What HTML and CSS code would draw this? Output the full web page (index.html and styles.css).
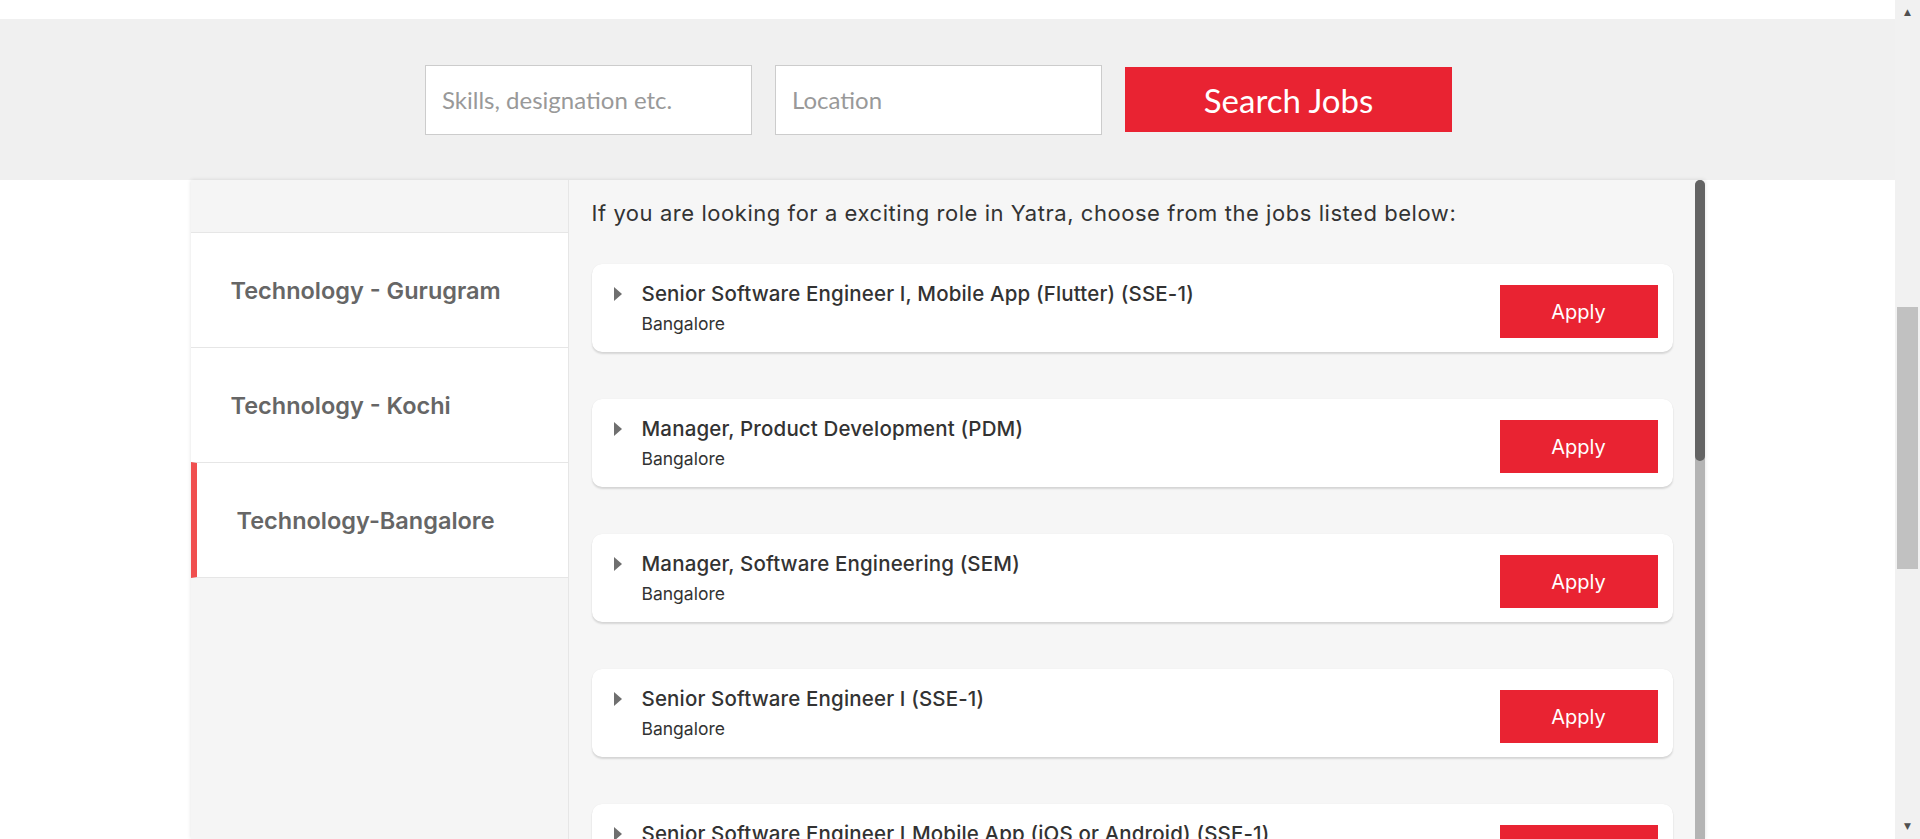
FILE: index.html
```html
<!DOCTYPE html>
<html lang="en">
<head>
<meta charset="utf-8">
<title>Careers - Jobs</title>
<link rel="stylesheet" href="styles.css">
</head>
<body>
<div class="page">
  <div class="main">
    <div class="top-strip"></div>
    <header class="search-band">
      <form class="search-form">
        <input class="field" type="text" placeholder="Skills, designation etc.">
        <input class="field" type="text" placeholder="Location">
        <button class="search-btn" type="button">Search Jobs</button>
      </form>
    </header>
    <section class="jobs">
      <nav class="dept-nav">
        <div class="dept-head"></div>
        <a class="dept">Technology - Gurugram</a>
        <a class="dept">Technology - Kochi</a>
        <a class="dept active">Technology-Bangalore</a>
      </nav>
      <div class="job-panel">
        <div class="job-list">
          <p class="intro">If you are looking for a exciting role in Yatra, choose from the jobs listed below:</p>
          <div class="job-card">
            <span class="caret"></span>
            <div class="job-info">
              <div class="job-title">Senior Software Engineer I, Mobile App (Flutter) (SSE-1)</div>
              <div class="job-loc">Bangalore</div>
            </div>
            <button class="apply-btn" type="button">Apply</button>
          </div>
          <div class="job-card">
            <span class="caret"></span>
            <div class="job-info">
              <div class="job-title">Manager, Product Development (PDM)</div>
              <div class="job-loc">Bangalore</div>
            </div>
            <button class="apply-btn" type="button">Apply</button>
          </div>
          <div class="job-card">
            <span class="caret"></span>
            <div class="job-info">
              <div class="job-title">Manager, Software Engineering (SEM)</div>
              <div class="job-loc">Bangalore</div>
            </div>
            <button class="apply-btn" type="button">Apply</button>
          </div>
          <div class="job-card">
            <span class="caret"></span>
            <div class="job-info">
              <div class="job-title">Senior Software Engineer I (SSE-1)</div>
              <div class="job-loc">Bangalore</div>
            </div>
            <button class="apply-btn" type="button">Apply</button>
          </div>
          <div class="job-card">
            <span class="caret"></span>
            <div class="job-info">
              <div class="job-title">Senior Software Engineer I,Mobile App (iOS or Android) (SSE-1)</div>
              <div class="job-loc">Bangalore</div>
            </div>
            <button class="apply-btn" type="button">Apply</button>
          </div>
        </div>
        <div class="panel-scrollbar"><div class="panel-thumb"></div></div>
      </div>
    </section>
  </div>
  <div class="page-scrollbar">
    <span class="sb-arrow">&#9650;</span>
    <div class="sb-track"><div class="sb-thumb"></div></div>
    <span class="sb-arrow">&#9660;</span>
  </div>
</div>
</body>
</html>
```
FILE: styles.css
```css
* { box-sizing: border-box; }
html, body { margin: 0; padding: 0; height: 100%; }
body { background: #fff; overflow: hidden; font-family: "Inter", "Noto Sans", sans-serif; }

.page { display: flex; height: 839px; }
.main { flex: 1; display: flex; flex-direction: column; min-width: 0; }

.top-strip { height: 19px; background: #fff; }

.search-band {
  height: 161px;
  background: #f0f0f0;
  display: flex;
  align-items: center;
  justify-content: center;
  padding-right: 18px;
}
.search-form { display: flex; align-items: center; gap: 23px; margin: 0; }
.field {
  width: 327px;
  height: 70px;
  border: 1px solid #cccccc;
  background: #fff;
  padding: 0 16px;
  font-family: "Lato", sans-serif;
  font-size: 24px;
  color: #333;
  outline: none;
}
.field::placeholder { color: #999; }
.search-btn {
  width: 327px;
  height: 65px;
  border: 0;
  background: #e92332;
  color: #fff;
  font-family: "Lato", sans-serif;
  font-size: 33px;
  padding: 0;
}

.jobs {
  flex: 1;
  min-height: 0;
  width: 1514px;
  margin: 0 auto;
  display: flex;
  box-shadow: 0 0 4px rgba(0,0,0,0.12);
}

.dept-nav {
  width: 378px;
  flex: none;
  background: #f5f5f5;
  border-right: 1px solid #e6e6e6;
  display: flex;
  flex-direction: column;
}
.dept-head { height: 52px; }
.dept {
  display: flex;
  align-items: center;
  height: 115px;
  background: #fff;
  border-top: 1px solid #e6e6e6;
  padding-left: 40px;
  font-family: "Inter", sans-serif;
  font-weight: 600;
  font-size: 23.5px;
  color: #666;
}
.dept:last-child { border-bottom: 1px solid #e6e6e6; height: 116px; }
.dept.active { border-left: 6px solid #f04f4f; }

.job-panel {
  flex: 1;
  min-width: 0;
  background: #f6f6f6;
  display: flex;
  overflow: hidden;
}
.job-list {
  flex: 1;
  min-width: 0;
  padding: 19px 22px 0 23px;
  overflow: hidden;
}
.panel-scrollbar {
  width: 10px;
  flex: none;
  background: #b4b4b4;
  border-radius: 5px 5px 0 0;
}
.panel-thumb {
  height: 281px;
  background: #646464;
  border-radius: 5px;
}

.intro {
  margin: 0 0 37px;
  font-size: 22px;
  letter-spacing: 0.55px;
  line-height: 28px;
  color: #333;
  white-space: nowrap;
}

.job-card {
  height: 88px;
  margin-bottom: 47px;
  background: #fff;
  border-radius: 10px;
  box-shadow: 0 2px 2px rgba(0,0,0,0.13), 0 0 1px rgba(0,0,0,0.08);
  display: flex;
  align-items: flex-start;
  padding: 17px 15px 0 22px;
}
.caret {
  flex: none;
  width: 0;
  height: 0;
  margin-top: 6px;
  border-left: 8px solid #6f6f6f;
  border-top: 7px solid transparent;
  border-bottom: 7px solid transparent;
}
.job-info { margin-left: 20px; }
.job-title {
  font-size: 20.5px;
  font-weight: 500;
  letter-spacing: 0.15px;
  line-height: 26px;
  color: #333;
  white-space: nowrap;
}
.job-loc {
  margin-top: 6px;
  font-size: 17.5px;
  line-height: 22px;
  color: #333;
}
.apply-btn {
  margin-left: auto;
  margin-top: 4px;
  width: 158px;
  height: 53px;
  border: 0;
  padding: 0;
  background: #e92332;
  color: #fff;
  font-family: "Inter", sans-serif;
  font-size: 20px;
}

.page-scrollbar {
  width: 25px;
  flex: none;
  background: #f1f1f1;
  display: flex;
  flex-direction: column;
  align-items: center;
}
.sb-arrow {
  height: 25px;
  line-height: 25px;
  font-size: 9px;
  color: #505050;
  font-family: "DejaVu Sans", sans-serif;
}
.sb-track { flex: 1; width: 100%; padding: 282px 2px 0; }
.sb-thumb { height: 262px; background: #c1c1c1; }
```
